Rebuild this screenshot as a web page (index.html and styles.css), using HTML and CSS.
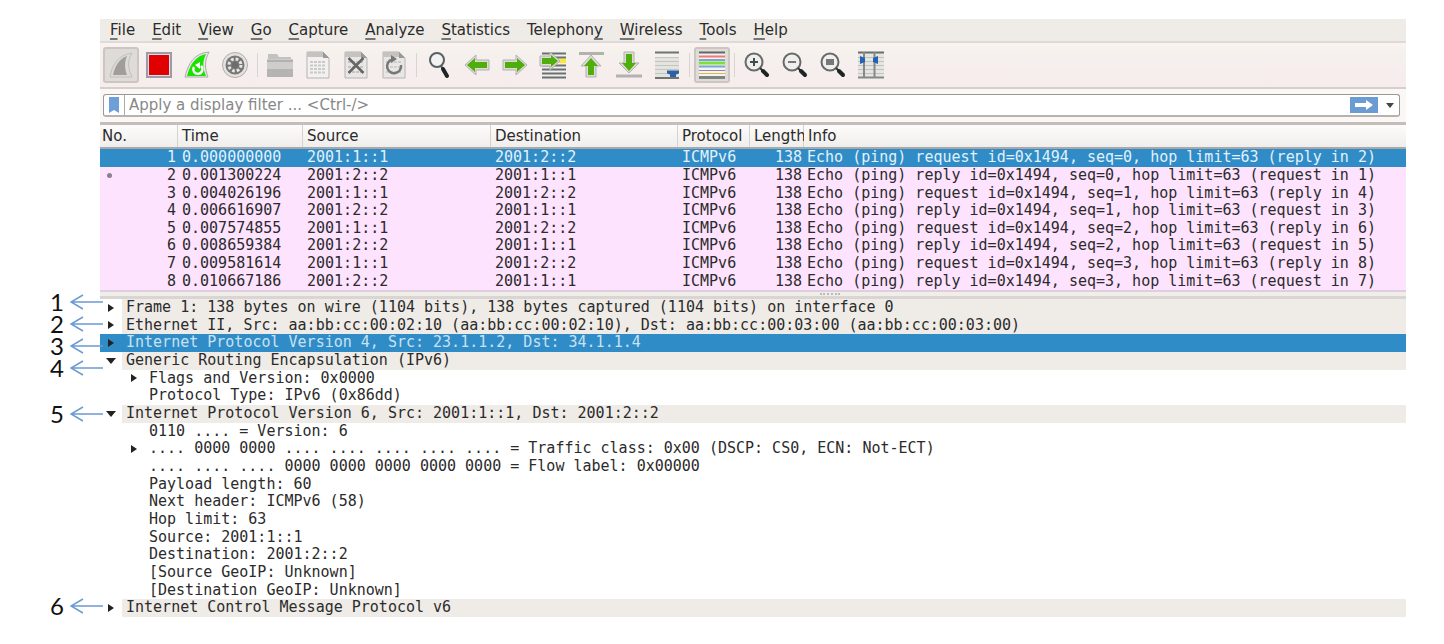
FILE: index.html
```html
<!DOCTYPE html>
<html lang="en">
<head>
  <meta charset="UTF-8" />
  <meta name="viewport" content="width=device-width, initial-scale=1.0" />
  <title>Packet capture</title>
  <link rel="stylesheet" href="styles.css">
</head>
<body>
  <div class="page">
    <div class="window">
      <nav class="menubar">
        <button><u>F</u>ile</button>
        <button><u>E</u>dit</button>
        <button><u>V</u>iew</button>
        <button><u>G</u>o</button>
        <button><u>C</u>apture</button>
        <button><u>A</u>nalyze</button>
        <button><u>S</u>tatistics</button>
        <button>Telephon<u>y</u></button>
        <button><u>W</u>ireless</button>
        <button><u>T</u>ools</button>
        <button><u>H</u>elp</button>
      </nav>

      <div class="toolbar">
        <button class="pressed" aria-label="Start capture">
          <svg viewBox="0 0 28 28"><path d="M3 26C5 14 11 4 25 2C20 10 21 18 25 26Z" fill="#dddbd8" stroke="#c2c0bd"/><path d="M6 24C8 15 12 8 20 5C17 12 18 18 20 24Z" fill="#a09e9b"/></svg>
        </button>
        <button aria-label="Stop capture">
          <svg viewBox="0 0 28 28"><rect x="2" y="2" width="24" height="24" fill="#e0e0e6" stroke="#9b9ca8" stroke-width="2"/><rect x="4" y="4" width="20" height="20" fill="#e00000"/></svg>
        </button>
        <button aria-label="Restart capture">
          <svg viewBox="0 0 28 28"><path d="M2 26C5 13 11 2 26 1C21 10 22 18 25 26Z" fill="#e9e9e9" stroke="#aaa"/><path d="M4 25C7 13 13 5 23 3C19 11 20 18 23 25Z" fill="#1be000"/><path d="M11 16A4.500 4.500 0 1 0 18 15" fill="none" stroke="#fff" stroke-width="2.500"/><path d="M17 11v7l-5-4z" fill="#fff"/></svg>
        </button>
        <button aria-label="Capture options">
          <svg viewBox="0 0 28 28"><circle cx="14" cy="14" r="12.500" fill="#e4e2df" stroke="#b0aeab"/><circle cx="14" cy="14" r="9.500" fill="#777"/><circle cx="14" cy="14" r="6" fill="none" stroke="#e8e6e3" stroke-width="3" stroke-dasharray="2.700 2"/><circle cx="14" cy="14" r="3" fill="#6c6c6c"/></svg>
        </button>
        <span class="sep"></span>
        <button aria-label="Open file">
          <svg viewBox="0 0 28 28"><path d="M2 25V3h9l2 3h12v19z" fill="#c4c2c0"/><path d="M1 8h26v18H1z" fill="#cfcdcb"/><path d="M1 9h26v2H1z" fill="#b3b1af"/><path d="M1 18h26v8H1z" fill="#b6b4b2"/></svg>
        </button>
        <button aria-label="Save file">
          <svg viewBox="0 0 28 28"><path d="M3 1h16l6 6v20H3z" fill="#f3f1ef" stroke="#b5b3b1"/><path d="M3 1h16v5H3z" fill="#c5c3c1"/><path d="M19 1v6h6z" fill="#999"/><path d="M6 11h16M6 14.500h16M6 18h16M6 21.500h16" stroke="#cccac8" stroke-width="2" stroke-dasharray="3 1"/></svg>
        </button>
        <button aria-label="Close file">
          <svg viewBox="0 0 28 28"><path d="M3 1h16l6 6v20H3z" fill="#e9e7e5" stroke="#b5b3b1"/><path d="M3 1h16v5H3z" fill="#c5c3c1"/><path d="M19 1v6h6z" fill="#999"/><path d="M6 11h16M6 16h16M6 21h16" stroke="#c6c4c2" stroke-width="2" stroke-dasharray="3 1"/><path d="M6.500 7l15 15M21.500 7l-15 15" stroke="#666" stroke-width="2.500"/></svg>
        </button>
        <button aria-label="Reload file">
          <svg viewBox="0 0 28 28"><path d="M3 1h16l6 6v20H3z" fill="#e9e7e5" stroke="#b5b3b1"/><path d="M3 1h16v5H3z" fill="#c5c3c1"/><path d="M19 1v6h6z" fill="#999"/><path d="M6 11h16M6 16h16M6 21h16" stroke="#d0cecc" stroke-width="2" stroke-dasharray="3 1"/><path d="M21 14A7 7 0 1 1 12 8.500" fill="none" stroke="#777" stroke-width="2.500"/><path d="M11 4v8l6-4z" fill="#777"/></svg>
        </button>
        <span class="sep"></span>
        <button aria-label="Find packet">
          <svg viewBox="0 0 28 28"><circle cx="12" cy="9" r="7" fill="#f2f2f2" stroke="#59605f" stroke-width="2"/><path d="M16 15l2 3" stroke="#555" stroke-width="2"/><path d="M18 18l4 7" stroke="#1c2625" stroke-width="4" stroke-linecap="round"/></svg>
        </button>
        <button aria-label="Previous packet">
          <svg viewBox="0 0 28 28"><path d="M2 14L13 4v5h13v10H13v5z" class="halo"/><path d="M4 14l8-7v4h12v6H12v4z" class="arrow"/></svg>
        </button>
        <button aria-label="Next packet">
          <svg viewBox="0 0 28 28"><path d="M26 14L15 4v5H2v10h13v5z" class="halo"/><path d="M24 14l-8-7v4H4v6h12v4z" class="arrow"/></svg>
        </button>
        <button aria-label="Go to packet">
          <svg viewBox="0 0 28 28"><path d="M3 2.500h24M3 6.500h24M3 14.500h24M3 18.500h24M3 22.500h24M3 26.500h24" stroke="#687270" stroke-width="2"/><path d="M18 8h9v4h-9z" fill="#fbe92f"/><path d="M21 10L11 1v4H1v10h10v4z" class="halo"/><path d="M19 10l-7-6v3H3v6h9v3z" class="arrow"/></svg>
        </button>
        <button aria-label="First packet">
          <svg viewBox="0 0 28 28"><path d="M2 2.500h25" stroke="#b4b2af" stroke-width="3"/><path d="M14 4L4 15h5v11h10V15h5z" class="halo"/><path d="M14 7l-7 8h4v9h6v-9h4z" class="arrow"/></svg>
        </button>
        <button aria-label="Last packet">
          <svg viewBox="0 0 28 28"><path d="M1 25h26" stroke="#b4b2af" stroke-width="3"/><path d="M14 22L4 12h5V1h10v11h5z" class="halo"/><path d="M14 20l-7-8h4V3h6v9h4z" class="arrow"/></svg>
        </button>
        <button aria-label="Auto scroll">
          <svg viewBox="0 0 28 28"><path d="M2 6h24v20H2z" fill="#e4e3df"/><path d="M2 1.500h24M2 27h24" stroke="#6d7472" stroke-width="2"/><path d="M2 6.500h24M2 10.500h24M2 14.500h24M2 18.500h24M2 22.500h12" stroke="#c3c5c0"/><path d="M14 19.500h12v3l-3 1v2.500h-6V23.500l-3-1z" fill="#2a61a9"/></svg>
        </button>
        <span class="sep"></span>
        <button class="pressed" aria-label="Colorize packets">
          <svg viewBox="0 0 28 28"><path d="M1 1h26v26H1z" fill="#f4f3ef"/><path d="M1 1.500h26" stroke="#666" stroke-width="2"/><path d="M1 5.500h26" stroke="#f27777" stroke-width="2"/><path d="M1 9h26M1 15.500h26" stroke="#7ba3d6" stroke-width="2"/><path d="M1 12h26" stroke="#7de03a" stroke-width="3"/><path d="M1 19.500h26" stroke="#9a80a8"/><path d="M1 22.500h26" stroke="#d5bd48"/><path d="M1 26.500h26" stroke="#7d8482" stroke-width="3"/></svg>
        </button>
        <span class="sep"></span>
        <button aria-label="Zoom in">
          <svg viewBox="0 0 28 28"><circle cx="11" cy="11" r="8.500" class="lens"/><path d="M7 11h8M11 7v8" stroke="#444c4b" stroke-width="2"/><path d="M17 17l3 3" class="neck"/><path d="M20 20l4 4" class="handle"/></svg>
        </button>
        <button aria-label="Zoom out">
          <svg viewBox="0 0 28 28"><circle cx="11" cy="11" r="8.500" class="lens"/><path d="M7 11h8" stroke="#777" stroke-width="2"/><path d="M17 17l3 3" class="neck"/><path d="M20 20l4 4" class="handle"/></svg>
        </button>
        <button aria-label="Normal size">
          <svg viewBox="0 0 28 28"><circle cx="11" cy="11" r="8.500" class="lens"/><path d="M7 9.500h8M7 12.500h8" stroke="#777" stroke-width="3"/><path d="M17 17l3 3" class="neck"/><path d="M20 20l4 4" class="handle"/></svg>
        </button>
        <button aria-label="Resize columns">
          <svg viewBox="0 0 28 28"><path d="M1 2h26v24H1z" fill="#e6e5e1"/><path d="M1 1.500h26" stroke="#666e6c" stroke-width="2"/><path d="M1 6.500h26M1 10.500h26M1 14.500h26M1 18.500h26M1 22.500h26" stroke="#c0c2bd"/><path d="M1 26.500h26M7 1v26M17.500 1v26" stroke="#858987" stroke-width="2"/><path d="M3 5l5 2v4l-5 2zM21 5l-5 2v4l5 2z" fill="#2462b8"/></svg>
        </button>
      </div>

      <div class="filterbar">
        <div class="filter">
          <button class="bookmark" aria-label="Filter bookmarks">
            <svg viewBox="0 0 10 16"><path d="M0 0h10v16l-5-3-5 3z" fill="#6f9fd8"/></svg>
          </button>
          <input type="text" aria-label="Display filter" placeholder="Apply a display filter ... &lt;Ctrl-/&gt;">
          <button class="apply" aria-label="Apply filter">
            <svg viewBox="0 0 20 12"><path d="M1 4h11V1l7 5-7 5V8H1z" fill="#fff"/></svg>
          </button>
          <button class="recent" aria-label="Recent filters">
            <svg viewBox="0 0 8 5"><path d="M0 0h8L4 5z" fill="#444"/></svg>
          </button>
        </div>
      </div>

      <table class="packets">
        <colgroup>
          <col class="col-no"><col class="col-time"><col class="col-source"><col class="col-dest"><col class="col-protocol"><col class="col-length"><col>
        </colgroup>
        <thead>
          <tr><th>No.</th><th>Time</th><th>Source</th><th>Destination</th><th>Protocol</th><th>Length</th><th>Info</th></tr>
        </thead>
        <tbody>
          <tr class="selected"><td>1</td><td>0.000000000</td><td>2001:1::1</td><td>2001:2::2</td><td>ICMPv6</td><td>138</td><td>Echo (ping) request id=0x1494, seq=0, hop limit=63 (reply in 2)</td></tr>
          <tr><td><span class="related"></span>2</td><td>0.001300224</td><td>2001:2::2</td><td>2001:1::1</td><td>ICMPv6</td><td>138</td><td>Echo (ping) reply id=0x1494, seq=0, hop limit=63 (request in 1)</td></tr>
          <tr><td>3</td><td>0.004026196</td><td>2001:1::1</td><td>2001:2::2</td><td>ICMPv6</td><td>138</td><td>Echo (ping) request id=0x1494, seq=1, hop limit=63 (reply in 4)</td></tr>
          <tr><td>4</td><td>0.006616907</td><td>2001:2::2</td><td>2001:1::1</td><td>ICMPv6</td><td>138</td><td>Echo (ping) reply id=0x1494, seq=1, hop limit=63 (request in 3)</td></tr>
          <tr><td>5</td><td>0.007574855</td><td>2001:1::1</td><td>2001:2::2</td><td>ICMPv6</td><td>138</td><td>Echo (ping) request id=0x1494, seq=2, hop limit=63 (reply in 6)</td></tr>
          <tr><td>6</td><td>0.008659384</td><td>2001:2::2</td><td>2001:1::1</td><td>ICMPv6</td><td>138</td><td>Echo (ping) reply id=0x1494, seq=2, hop limit=63 (request in 5)</td></tr>
          <tr><td>7</td><td>0.009581614</td><td>2001:1::1</td><td>2001:2::2</td><td>ICMPv6</td><td>138</td><td>Echo (ping) request id=0x1494, seq=3, hop limit=63 (reply in 8)</td></tr>
          <tr><td>8</td><td>0.010667186</td><td>2001:2::2</td><td>2001:1::1</td><td>ICMPv6</td><td>138</td><td>Echo (ping) reply id=0x1494, seq=3, hop limit=63 (request in 7)</td></tr>
        </tbody>
      </table>
      <div class="splitter"><span class="grip"></span></div>
    </div>

    <ol class="notes">
      <li>1 <svg viewBox="0 0 34 16"><path d="M33 8H1M13 1L1 8l12 7"/></svg></li>
      <li>2 <svg viewBox="0 0 34 16"><path d="M33 8H1M13 1L1 8l12 7"/></svg></li>
      <li>3 <svg viewBox="0 0 34 16"><path d="M33 8H1M13 1L1 8l12 7"/></svg></li>
      <li>4 <svg viewBox="0 0 34 16"><path d="M33 8H1M13 1L1 8l12 7"/></svg></li>
      <li class="note-ipv6">5 <svg viewBox="0 0 34 16"><path d="M33 8H1M13 1L1 8l12 7"/></svg></li>
      <li class="note-icmp">6 <svg viewBox="0 0 34 16"><path d="M33 8H1M13 1L1 8l12 7"/></svg></li>
    </ol>

    <div class="tree">
      <div class="row top"><button class="closed" aria-label="Expand"></button><span>Frame 1: 138 bytes on wire (1104 bits), 138 bytes captured (1104 bits) on interface 0</span></div>
      <div class="row top"><button class="closed" aria-label="Expand"></button><span>Ethernet II, Src: aa:bb:cc:00:02:10 (aa:bb:cc:00:02:10), Dst: aa:bb:cc:00:03:00 (aa:bb:cc:00:03:00)</span></div>
      <div class="row top selected"><button class="closed" aria-label="Expand"></button><span>Internet Protocol Version 4, Src: 23.1.1.2, Dst: 34.1.1.4</span></div>
      <div class="row top"><button class="open" aria-label="Collapse"></button><span>Generic Routing Encapsulation (IPv6)</span></div>
      <div class="row child"><button class="closed" aria-label="Expand"></button><span>Flags and Version: 0x0000</span></div>
      <div class="row child leaf"><span>Protocol Type: IPv6 (0x86dd)</span></div>
      <div class="row top"><button class="open" aria-label="Collapse"></button><span>Internet Protocol Version 6, Src: 2001:1::1, Dst: 2001:2::2</span></div>
      <div class="row child leaf"><span>0110 .... = Version: 6</span></div>
      <div class="row child"><button class="closed" aria-label="Expand"></button><span>.... 0000 0000 .... .... .... .... .... = Traffic class: 0x00 (DSCP: CS0, ECN: Not-ECT)</span></div>
      <div class="row child leaf"><span>.... .... .... 0000 0000 0000 0000 0000 = Flow label: 0x00000</span></div>
      <div class="row child leaf"><span>Payload length: 60</span></div>
      <div class="row child leaf"><span>Next header: ICMPv6 (58)</span></div>
      <div class="row child leaf"><span>Hop limit: 63</span></div>
      <div class="row child leaf"><span>Source: 2001:1::1</span></div>
      <div class="row child leaf"><span>Destination: 2001:2::2</span></div>
      <div class="row child leaf"><span>[Source GeoIP: Unknown]</span></div>
      <div class="row child leaf"><span>[Destination GeoIP: Unknown]</span></div>
      <div class="row top"><button class="closed" aria-label="Expand"></button><span>Internet Control Message Protocol v6</span></div>
    </div>
  </div>
</body>
</html>
```

FILE: styles.css
```css
* {
  box-sizing: border-box;
}
body {
  margin: 0;
  background: white;
  color: #2b2b2b;
  font-family: "DejaVu Sans", sans-serif;
  font-size: 15px;
}
button {
  border: none;
  background: none;
  padding: 0;
  color: inherit;
  font: inherit;
}
svg {
  display: block;
}
.page {
  display: grid;
  grid-template-columns: 100px minmax(0, 1fr);
  align-items: start;
  padding: 19px 38px 24px 0;
}
.window {
  grid-column: 2;
}

/* menu and toolbar */
.menubar {
  display: flex;
  padding-left: 2px;
  background: #efece8;
  border-bottom: 2px solid #dddad7;
}
.menubar button {
  padding: 0 9px 0 8px;
  line-height: 22px;
}
.menubar u {
  text-decoration-color: #777;
  text-decoration-thickness: 2px;
  text-underline-offset: 3px;
}
.toolbar {
  display: flex;
  align-items: center;
  padding: 4px 2px;
  background: linear-gradient(#fbf3f1 0, #f5f1ed 20%, #f6eeed 60%, #f6ecec);
  border-bottom: 2px solid #d4d1cd;
}
.toolbar button {
  display: flex;
  align-items: center;
  justify-content: center;
  width: 36px;
  height: 36px;
  margin: 0 1px;
  flex: none;
}
.toolbar svg {
  flex: none;
  width: 28px;
  height: 28px;
}
.toolbar .pressed {
  background: #dfdcd8;
  border: 2px solid #cbc6c3;
  border-radius: 3px;
}
.sep {
  width: 1px;
  height: 24px;
  margin: 0 3px;
  background: #d9d4d2;
}
.halo {
  fill: #dddbd8;
  stroke: #b3b1af;
  stroke-linejoin: round;
}
.arrow {
  fill: #4fae0b;
}
.lens {
  fill: #f0efed;
  stroke: #646b69;
  stroke-width: 2;
}
.neck {
  stroke: #333;
  stroke-width: 2;
}
.handle {
  stroke: #1d2423;
  stroke-width: 4;
  stroke-linecap: round;
}

/* display filter */
.filterbar {
  padding: 5px 6px 5px 3px;
  background: #fbf7f5;
  border-bottom: 3px solid #c3bdbb;
}
.filter {
  display: flex;
  align-items: center;
  height: 23px;
  background: white;
  border: 1px solid #999;
  border-bottom: 2px solid #b5b2b0;
  border-radius: 3px;
}
.bookmark {
  align-self: stretch;
  display: flex;
  align-items: center;
  padding: 0 5px;
  border-right: 1px solid #aaa;
}
.bookmark svg {
  width: 10px;
  height: 16px;
}
.filter input {
  flex: 1;
  min-width: 0;
  height: 20px;
  padding: 0 4px;
  border: none;
  outline: none;
  background: none;
  font: inherit;
}
.filter input::placeholder {
  color: #888;
}
.apply {
  padding: 2px 4px;
  background: #6b9bd3;
}
.apply svg {
  width: 20px;
  height: 12px;
}
.recent {
  padding: 0 5px 0 8px;
}
.recent svg {
  width: 8px;
  height: 5px;
}

/* packet list */
.packets {
  width: 100%;
  height: 165px;
  table-layout: fixed;
  border-collapse: collapse;
}
.col-no { width: 78px; }
.col-time { width: 125px; }
.col-source { width: 188px; }
.col-dest { width: 187px; }
.col-protocol { width: 72px; }
.col-length { width: 54px; }
.packets th {
  height: 23px;
  padding: 0 0 0 4px;
  overflow: hidden;
  background: linear-gradient(#fefcfb, #efeeed);
  border-bottom: 2px solid #aaa8a6;
  box-shadow: inset -1px 0 #d6d2d0;
  font-weight: normal;
  line-height: 20px;
  text-align: left;
  white-space: nowrap;
}
.packets th:first-child {
  padding-left: 2px;
}
.packets th:last-child {
  box-shadow: none;
}
.packets td {
  padding: 0 4px;
  overflow: hidden;
  background: #fee3ff;
  font-family: "DejaVu Sans Mono", monospace;
  line-height: 17px;
  white-space: nowrap;
}
.packets td:nth-child(1),
.packets td:nth-child(6) {
  padding-right: 2px;
  text-align: right;
}
.packets td:last-child {
  padding-left: 3px;
}
.packets .selected td {
  background: #308cc6;
  color: #e2f1fa;
}
.related {
  float: left;
  width: 5px;
  height: 5px;
  margin: 6px 0 0 3px;
  border-radius: 50%;
  background: #8c808c;
}
.splitter {
  display: flex;
  justify-content: center;
  align-items: center;
  height: 9px;
  padding-left: 154px;
  background: #f1eeea;
  border-top: 2px solid #ddcfdd;
  border-bottom: 3px solid #d9d5d3;
}
.grip {
  width: 20px;
  border-top: 2px dotted #bbb;
}

/* numbered notes beside the tree */
.notes {
  margin: -8px 0 0;
  padding: 0;
  list-style: none;
  color: #111;
  font-family: Lato, sans-serif;
  font-size: 24px;
  line-height: 22px;
}
.notes li {
  position: relative;
  z-index: 1;
  display: flex;
  align-items: center;
  gap: 6px;
  height: 22px;
  padding-left: 50px;
}
.notes .note-ipv6 {
  margin-top: 24px;
}
.notes .note-icmp {
  margin-top: 170px;
}
.notes svg {
  flex: none;
  width: 34px;
  height: 16px;
  fill: none;
  stroke: #6c9bd2;
  stroke-width: 1.5;
}

/* packet details */
.tree {
  display: grid;
  grid-auto-rows: 1fr;
  min-height: 318px;
  font-family: "DejaVu Sans Mono", monospace;
  line-height: 17px;
}
.row {
  display: flex;
  white-space: nowrap;
}
.row button {
  display: flex;
  align-items: center;
  justify-content: center;
  width: 22px;
}
.row span {
  flex: 1;
  min-width: 0;
  padding-left: 4px;
}
.top span {
  background: #efece8;
}
.child {
  padding-left: 23px;
}
.leaf {
  padding-left: 45px;
}
.closed::before {
  content: "";
  border: 4px solid transparent;
  border-left: 6px solid #222;
  border-right: none;
}
.open::before {
  content: "";
  border: 5px solid transparent;
  border-top: 6px solid #222;
  border-bottom: none;
}
.row.selected,
.row.selected span {
  background: #308cc6;
  color: #c8e2f2;
}
```
